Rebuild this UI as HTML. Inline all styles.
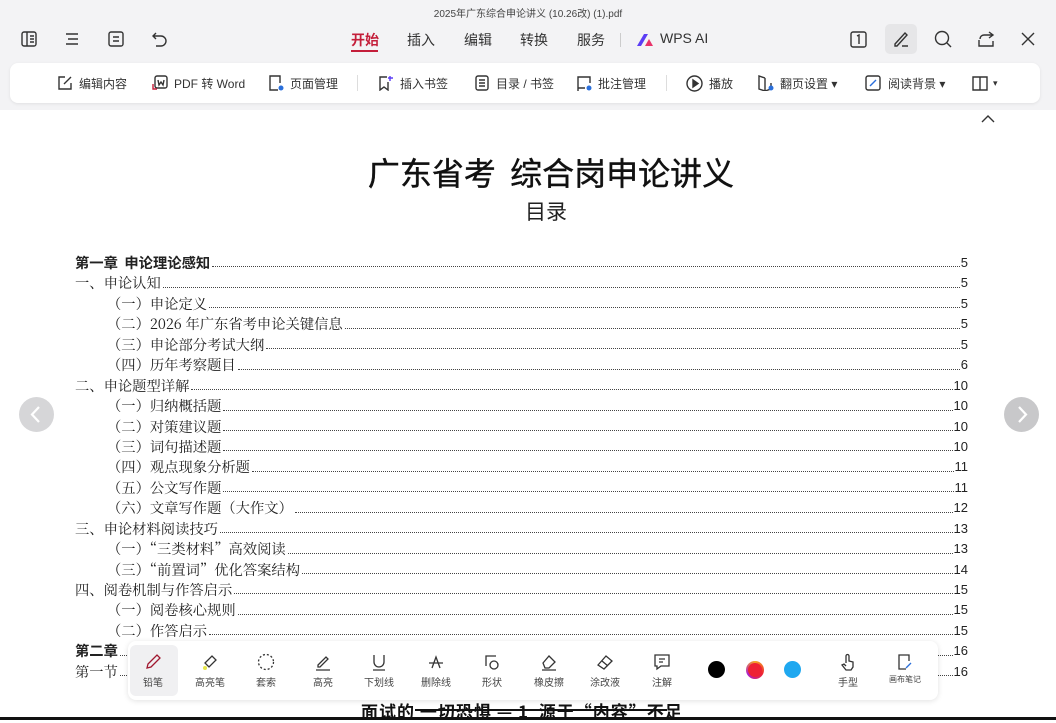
<!DOCTYPE html>
<html><head><meta charset="utf-8"><style>
*{margin:0;padding:0;box-sizing:border-box}
body{width:1056px;height:720px;overflow:hidden;background:#fff;font-family:"Liberation Sans","Noto Sans CJK SC",sans-serif;position:relative;color:#222}
.top{position:absolute;left:0;top:0;width:1056px;height:110px;background:#f3f3f5}
.title{position:absolute;top:5px;left:0;width:1056px;text-align:center;font-size:10px;color:#444}
.tab{position:absolute;top:30px;font-size:14px;color:#333;white-space:nowrap}
.ic{position:absolute;stroke:#333;fill:none;stroke-width:1.4}
.bar{position:absolute;left:10px;top:63px;width:1030px;height:40px;background:#fff;border-radius:8px;box-shadow:0 1px 3px rgba(0,0,0,.08)}
.bi{position:absolute;top:75px;font-size:12px;color:#333;white-space:nowrap}
.h1{position:absolute;top:149px;left:0;width:1102px;text-align:center;font-family:"Noto Sans CJK SC",sans-serif;font-size:32px;font-weight:normal;color:#111;-webkit-text-stroke:0.4px #111}
.h2{position:absolute;top:196px;left:0;width:1092px;text-align:center;font-family:"Noto Sans CJK SC",sans-serif;font-size:21px;color:#222}
.toc{position:absolute;left:75px;top:253px;width:893px}
.row{display:flex;height:20.45px;line-height:20px;font-family:"Noto Serif CJK SC","Liberation Serif",serif;font-size:14.3px;color:#222;white-space:nowrap}
.row .t{padding-right:2px}
.row .d{flex:1;border-bottom:1.5px dotted #444;margin-bottom:6px}
.row .p{font-family:"Liberation Sans",sans-serif;font-size:13px;padding-left:1px}
.b{font-weight:bold;font-family:"Noto Sans CJK SC",sans-serif!important}
.l2{padding-left:32px}
.circ{position:absolute;top:397px;width:35px;height:35px;border-radius:50%;background:#d6d6d8}
.tools{position:absolute;left:128px;top:641px;width:810px;height:59px;background:#fff;border-radius:8px;box-shadow:0 1px 6px rgba(0,0,0,.12)}
.tl{position:absolute;top:674px;font-size:10px;color:#444;width:50px;text-align:center}
.ti{position:absolute;top:653px;stroke:#333;fill:none;stroke-width:1.3}
</style></head><body>
<div class="top"></div>
<div class="title">2025年广东综合申论讲义 (10.26改) (1).pdf</div>
<svg class="ic" style="left:21px;top:31px" width="16" height="16"><rect x="1" y="1" width="14" height="14" rx="2"/><path d="M6 1v14M9 5h4M9 8h4M9 11h4"/></svg>
<svg class="ic" style="left:64px;top:32px" width="16" height="14"><path d="M2 2h12M4 7h10M2 12h12"/></svg>
<svg class="ic" style="left:108px;top:31px" width="16" height="16"><rect x="1" y="1" width="14" height="14" rx="2"/><path d="M5 6h6M5 10h6"/></svg>
<svg class="ic" style="left:151px;top:31px" width="18" height="16"><path d="M5 2L2 5l3 3M2 5h8a5 5 0 010 10H5"/></svg>
<div class="tab" style="left:351px;color:#c41e3a;font-weight:bold">开始</div>
<div style="position:absolute;left:351px;top:50px;width:27px;height:2px;background:#c41e3a"></div>
<div class="tab" style="left:407px">插入</div>
<div class="tab" style="left:464px">编辑</div>
<div class="tab" style="left:520px">转换</div>
<div class="tab" style="left:577px">服务</div>
<div style="position:absolute;left:620px;top:33px;width:1px;height:14px;background:#ccc"></div>
<svg style="position:absolute;left:636px;top:33px" width="18" height="14"><path d="M1 13L8 1h4L5 13z" fill="#5b3df5"/><path d="M9 13l4-7 4 7z" fill="#e8336a"/></svg>
<div class="tab" style="left:660px">WPS AI</div>
<svg class="ic" style="left:850px;top:31px" width="17" height="17"><rect x="1" y="1" width="15" height="15" rx="2"/><path d="M7 5l2-1v9"/></svg>
<div style="position:absolute;left:885px;top:24px;width:32px;height:30px;background:#e6e6e8;border-radius:5px"></div>
<svg class="ic" style="left:892px;top:30px" width="18" height="18"><path d="M3 14L13 3l2 2L5 16H3zM10 16h6"/></svg>
<svg class="ic" style="left:934px;top:30px" width="18" height="18"><circle cx="8" cy="8" r="6.5"/><path d="M13 13l4 4"/></svg>
<svg class="ic" style="left:977px;top:30px" width="18" height="18"><path d="M12 2l4 3-4 3M16 5H7a4 4 0 00-4 4M2 10v6h14v-5"/></svg>
<svg class="ic" style="left:1021px;top:32px" width="14" height="14"><path d="M1 1l12 12M13 1L1 13"/></svg>
<div class="bar"></div>
<svg class="ic" style="left:57px;top:75px" width="16" height="16"><path d="M8 2H2v12h12V8M7 9l7-7"/></svg><div class="bi" style="left:79px">编辑内容</div>
<svg class="ic" style="left:152px;top:75px" width="16" height="16"><rect x="3" y="1" width="12" height="12" rx="2"/><path d="M6 5l1 5 2-3 2 3 1-5"/><path d="M1 9v5h4" stroke="#c41e3a"/></svg><div class="bi" style="left:174px">PDF 转 Word</div>
<svg class="ic" style="left:268px;top:75px" width="16" height="16"><path d="M10 15H2V1h10v7"/><circle cx="13" cy="13" r="2.5" fill="#2a6fdb" stroke="none"/></svg><div class="bi" style="left:290px">页面管理</div>
<div style="position:absolute;left:357px;top:75px;width:1px;height:16px;background:#ddd"></div>
<svg class="ic" style="left:378px;top:75px" width="16" height="16"><path d="M9 2H2v13l4-3 4 3V7"/><path d="M12 1v5M10 3h5" stroke="#5b3df5"/></svg><div class="bi" style="left:400px">插入书签</div>
<svg class="ic" style="left:474px;top:75px" width="16" height="16"><rect x="2" y="1" width="12" height="14" rx="2"/><path d="M5 5h6M5 8h6M5 11h6"/></svg><div class="bi" style="left:496px">目录 / 书签</div>
<svg class="ic" style="left:576px;top:75px" width="16" height="16"><path d="M9 13H2V2h12v6M2 13v3"/><circle cx="13" cy="13" r="2.5" fill="#2a6fdb" stroke="none"/></svg><div class="bi" style="left:598px">批注管理</div>
<div style="position:absolute;left:666px;top:75px;width:1px;height:16px;background:#ddd"></div>
<svg class="ic" style="left:686px;top:75px" width="17" height="17"><circle cx="8.5" cy="8.5" r="7.5"/><path d="M7 5v7l5-3.5z" fill="#333"/></svg><div class="bi" style="left:709px">播放</div>
<svg class="ic" style="left:757px;top:75px" width="17" height="16"><path d="M8 3L2 1v13l6 2 6-2V8M8 3v13"/><circle cx="14" cy="13" r="2.5" fill="#2a6fdb" stroke="none"/></svg><div class="bi" style="left:780px">翻页设置 ▾</div>
<svg class="ic" style="left:865px;top:75px" width="16" height="16"><rect x="1" y="1" width="14" height="14" rx="2"/><path d="M5 11l6-6" stroke="#2a6fdb"/></svg><div class="bi" style="left:888px">阅读背景 ▾</div>
<svg class="ic" style="left:972px;top:75px" width="17" height="16"><path d="M1 2h7v13H1zM8 2h7v13H8"/></svg><div class="bi" style="left:993px;font-size:9px;top:78px">▾</div>
<svg class="ic" style="left:981px;top:114px" width="14" height="10"><path d="M1 8l6-6 6 6"/></svg>
<div class="h1">广东省考&nbsp;&nbsp;综合岗申论讲义</div>
<div class="h2">目录</div>
<div class="toc">
<div class="row"><span class="t b">第一章&nbsp;&nbsp;申论理论感知</span><span class="d"></span><span class="p">5</span></div>
<div class="row"><span class="t">一、申论认知</span><span class="d"></span><span class="p">5</span></div>
<div class="row l2"><span class="t">（一）申论定义</span><span class="d"></span><span class="p">5</span></div>
<div class="row l2"><span class="t">（二）2026 年广东省考申论关键信息</span><span class="d"></span><span class="p">5</span></div>
<div class="row l2"><span class="t">（三）申论部分考试大纲</span><span class="d"></span><span class="p">5</span></div>
<div class="row l2"><span class="t">（四）历年考察题目</span><span class="d"></span><span class="p">6</span></div>
<div class="row"><span class="t">二、申论题型详解</span><span class="d"></span><span class="p">10</span></div>
<div class="row l2"><span class="t">（一）归纳概括题</span><span class="d"></span><span class="p">10</span></div>
<div class="row l2"><span class="t">（二）对策建议题</span><span class="d"></span><span class="p">10</span></div>
<div class="row l2"><span class="t">（三）词句描述题</span><span class="d"></span><span class="p">10</span></div>
<div class="row l2"><span class="t">（四）观点现象分析题</span><span class="d"></span><span class="p">11</span></div>
<div class="row l2"><span class="t">（五）公文写作题</span><span class="d"></span><span class="p">11</span></div>
<div class="row l2"><span class="t">（六）文章写作题（大作文）</span><span class="d"></span><span class="p">12</span></div>
<div class="row"><span class="t">三、申论材料阅读技巧</span><span class="d"></span><span class="p">13</span></div>
<div class="row l2"><span class="t">（一）“三类材料”高效阅读</span><span class="d"></span><span class="p">13</span></div>
<div class="row l2"><span class="t">（三）“前置词”优化答案结构</span><span class="d"></span><span class="p">14</span></div>
<div class="row"><span class="t">四、阅卷机制与作答启示</span><span class="d"></span><span class="p">15</span></div>
<div class="row l2"><span class="t">（一）阅卷核心规则</span><span class="d"></span><span class="p">15</span></div>
<div class="row l2"><span class="t">（二）作答启示</span><span class="d"></span><span class="p">15</span></div>
<div class="row"><span class="t b">第二章</span><span class="d"></span><span class="p">16</span></div>
<div class="row"><span class="t">第一节</span><span class="d"></span><span class="p">16</span></div>
</div>
<div class="circ" style="left:19px"><svg width="35" height="35"><path d="M20 10l-7 7.5 7 7.5" stroke="#fff" stroke-width="2.2" fill="none"/></svg></div>
<div class="circ" style="left:1004px;background:#c8c8ca"><svg width="35" height="35"><path d="M15 10l7 7.5-7 7.5" stroke="#fff" stroke-width="2.2" fill="none"/></svg></div>
<div class="tools"></div>
<div style="position:absolute;left:130px;top:645px;width:48px;height:51px;background:#f0f0f2;border-radius:6px"></div>
<svg class="ti" style="left:144px" width="18" height="18"><path d="M3 15l1-4 9-9 3 3-9 9z" stroke="#a01830"/></svg><div class="tl" style="left:128px">铅笔</div>
<svg class="ti" style="left:201px" width="18" height="18"><path d="M4 10l7-7 4 4-7 7z"/><circle cx="4" cy="15" r="2" fill="#e6e64a" stroke="none"/></svg><div class="tl" style="left:185px">高亮笔</div>
<svg class="ti" style="left:257px" width="18" height="18"><circle cx="9" cy="9" r="7.5" stroke-dasharray="2 2"/></svg><div class="tl" style="left:241px">套索</div>
<svg class="ti" style="left:314px" width="18" height="18"><path d="M4 12l8-8 2 2-8 8H4zM2 17h14" /></svg><div class="tl" style="left:298px">高亮</div>
<svg class="ti" style="left:370px" width="18" height="18"><path d="M4 2v7a5 5 0 0010 0V2M3 17h12"/></svg><div class="tl" style="left:354px">下划线</div>
<svg class="ti" style="left:427px" width="18" height="18"><path d="M5 15l4-11 4 11M2 10h14"/></svg><div class="tl" style="left:411px">删除线</div>
<svg class="ti" style="left:483px" width="18" height="18"><path d="M3 13V3h10"/><circle cx="11" cy="12" r="4"/></svg><div class="tl" style="left:467px">形状</div>
<svg class="ti" style="left:540px" width="18" height="18"><path d="M3 10l6-7 6 6-6 6H5zM2 17h14"/></svg><div class="tl" style="left:524px">橡皮擦</div>
<svg class="ti" style="left:596px" width="18" height="18"><path d="M2 12l8-9 6 5-8 8zM6 8l6 5"/></svg><div class="tl" style="left:580px">涂改液</div>
<svg class="ti" style="left:653px" width="18" height="18"><path d="M2 2h14v11H8l-4 3v-3H2zM6 6h6M6 9h4"/></svg><div class="tl" style="left:637px">注解</div>
<div style="position:absolute;left:708px;top:661px;width:17px;height:17px;border-radius:50%;background:#000"></div>
<div style="position:absolute;left:746px;top:661px;width:18px;height:18px;border-radius:50%;background:conic-gradient(#f5a623,#e23,#a2c,#f5a623);padding:2px"><div style="width:14px;height:14px;border-radius:50%;background:#e23"></div></div>
<div style="position:absolute;left:784px;top:661px;width:17px;height:17px;border-radius:50%;background:#1fa8f0"></div>
<svg class="ti" style="left:839px" width="18" height="18"><path d="M7 10V3a1.5 1.5 0 013 0v5l4 1v5l-2 3H7L3 12l2-1 2 2"/></svg><div class="tl" style="left:823px">手型</div>
<svg class="ti" style="left:896px" width="18" height="18"><path d="M10 16H3V2h10v6"/><path d="M10 15l5-5" stroke="#2a6fdb"/></svg><div class="tl" style="left:880px;font-size:8px">画布笔记</div>
<div style="position:absolute;left:361px;top:698px;font-family:'Noto Sans CJK SC',sans-serif;font-size:17px;font-weight:bold;color:#111;white-space:nowrap;letter-spacing:1px">面试的 一切恐惧 — 1&nbsp;&nbsp;源于“内容”不足</div>
<div style="position:absolute;left:415px;top:709px;width:252px;height:2px;background:#111"></div>
<div style="position:absolute;left:0;top:717px;width:1056px;height:3px;background:#111"></div>
</body></html>
